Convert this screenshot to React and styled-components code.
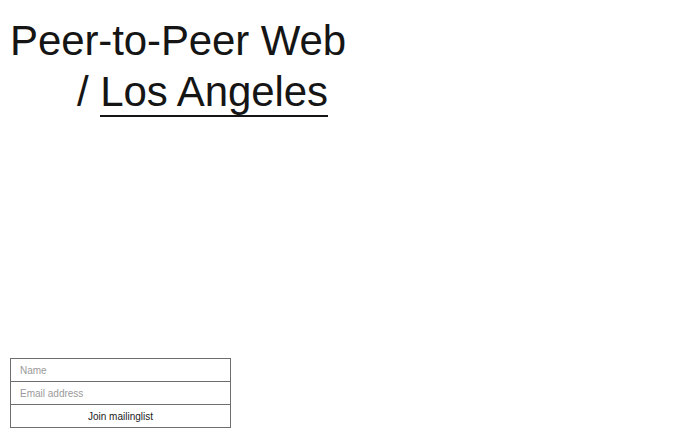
import React from 'react';
import styled, { createGlobalStyle } from 'styled-components';

const GlobalStyle = createGlobalStyle`
    html, body {
        margin: 0;
        padding: 0;
        background: #ffffff;
    }
    body {
        font-family: "Liberation Sans", Arial, sans-serif;
        color: #151515;
    }
`;

// Styled Components
const Page = styled.div`
    display: flex;
    flex-direction: column;
    justify-content: space-between;
    height: 438px;
    box-sizing: border-box;
    padding: 10px;
`;

const Title = styled.h1`
    margin: 5px 0 0 0;
    font-size: 42px;
    font-weight: 400;
    line-height: 51px;
    letter-spacing: -0.1px;
`;

const Line = styled.div`
    padding-left: ${props => props.indent || 0}px;
`;

const Place = styled.a`
    color: inherit;
    text-decoration: none;
    border-bottom: 2px solid #151515;
`;

const Form = styled.form`
    display: flex;
    flex-direction: column;
    width: 221px;
    box-sizing: border-box;
    border: 1px solid #6e6e6e;
`;

const Field = styled.input`
    height: 23px;
    box-sizing: border-box;
    border: 0;
    border-bottom: 1px solid #6e6e6e;
    padding: 0 9px;
    font-family: "Liberation Sans", Arial, sans-serif;
    font-size: 10px;
    color: #111111;
    outline: none;
    &::placeholder {
        color: #9a9a9a;
    }
`;

const Submit = styled.button`
    height: 22px;
    border: 0;
    background: #ffffff;
    font-family: "Liberation Sans", Arial, sans-serif;
    font-size: 10px;
    color: #222222;
    cursor: pointer;
    padding: 0;
`;

const App = () => {
    return (
        <>
            <GlobalStyle />
            <Page>
                <Title>
                    <Line>Peer-to-Peer Web</Line>
                    <Line indent={67}>/ <Place href="#">Los Angeles</Place></Line>
                </Title>
                <Form onSubmit={e => e.preventDefault()}>
                    <Field type="text" placeholder="Name" />
                    <Field type="email" placeholder="Email address" />
                    <Submit type="submit">Join mailinglist</Submit>
                </Form>
            </Page>
        </>
    );
};

export default App;
